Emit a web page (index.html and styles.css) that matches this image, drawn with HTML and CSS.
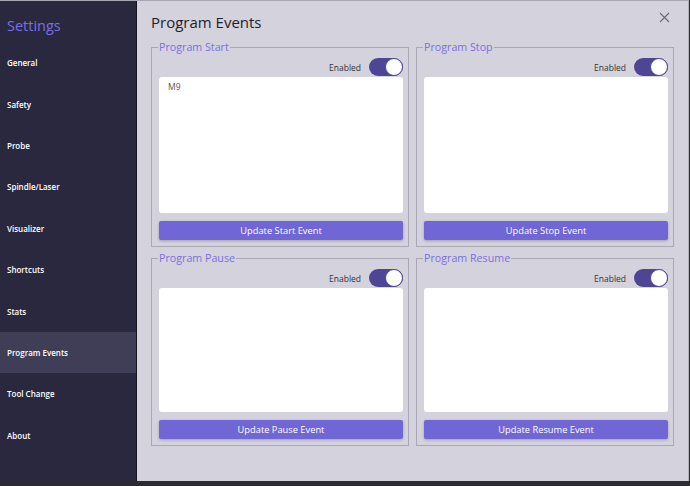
FILE: index.html
```html
<!DOCTYPE html>
<html lang="en">
<head>
    <meta charset="UTF-8">
    <meta name="viewport" content="width=device-width, initial-scale=1.0">
    <title>Settings</title>
    <link rel="stylesheet" href="styles.css">
</head>
<body>
    <div class="window">
        <!-- Sidebar -->
        <nav class="sidebar">
            <div class="sidebar-title">Settings</div>
            <div class="nav-item">General</div>
            <div class="nav-item">Safety</div>
            <div class="nav-item">Probe</div>
            <div class="nav-item">Spindle/Laser</div>
            <div class="nav-item">Visualizer</div>
            <div class="nav-item">Shortcuts</div>
            <div class="nav-item">Stats</div>
            <div class="nav-item active">Program Events</div>
            <div class="nav-item">Tool Change</div>
            <div class="nav-item">About</div>
        </nav>

        <!-- Main content -->
        <main class="content">
            <div class="header">
                <h1>Program Events</h1>
                <svg class="close" width="11" height="11" viewBox="0 0 11 11">
                    <path d="M1 1 L10 10 M10 1 L1 10" stroke="#6b6a73" stroke-width="1.1" fill="none"/>
                </svg>
            </div>

            <div class="events">
                <fieldset class="event">
                    <legend>Program Start</legend>
                    <div class="toggle-row">
                        <span>Enabled</span>
                        <div class="toggle"><div class="knob"></div></div>
                    </div>
                    <div class="code tall">M9</div>
                    <button>Update Start Event</button>
                </fieldset>

                <fieldset class="event">
                    <legend>Program Stop</legend>
                    <div class="toggle-row">
                        <span>Enabled</span>
                        <div class="toggle"><div class="knob"></div></div>
                    </div>
                    <div class="code tall"></div>
                    <button>Update Stop Event</button>
                </fieldset>

                <fieldset class="event">
                    <legend>Program Pause</legend>
                    <div class="toggle-row">
                        <span>Enabled</span>
                        <div class="toggle"><div class="knob"></div></div>
                    </div>
                    <div class="code short"></div>
                    <button>Update Pause Event</button>
                </fieldset>

                <fieldset class="event">
                    <legend>Program Resume</legend>
                    <div class="toggle-row">
                        <span>Enabled</span>
                        <div class="toggle"><div class="knob"></div></div>
                    </div>
                    <div class="code short"></div>
                    <button>Update Resume Event</button>
                </fieldset>
            </div>
        </main>
    </div>
</body>
</html>
```

FILE: styles.css
```css
body {
    margin: 0;
    background-color: #2b2b2e;
    font-family: "Open Sans", "Noto Sans", sans-serif;
    width: 690px;
    height: 486px;
    overflow: hidden;
}

.window {
    display: flex;
    width: 688px;
    height: 480px;
    border-top: 1px solid #a9a7b3;
    border-right: 1px solid #b4b2bd;
    background-color: #d4d2dd;
}

/* Sidebar */
.sidebar {
    width: 136px;
    flex-shrink: 0;
    background-color: #29283e;
    border-right: 1px solid #14131d;
}

.sidebar-title {
    height: 41px;
    box-sizing: border-box;
    padding: 15px 0 0 7px;
    font-size: 14.5px;
    line-height: 20px;
    color: #7a6ee6;
}

.nav-item {
    height: 41.4px;
    display: flex;
    align-items: center;
    padding-left: 7px;
    font-size: 8px;
    font-weight: 600;
    color: #ffffff;
}

.nav-item.active {
    background-color: #403e57;
}

/* Content */
.content {
    flex: 1;
    padding: 0 14px 0 14px;
}

.header {
    display: flex;
    justify-content: space-between;
    align-items: center;
    height: 39px;
}

.header h1 {
    margin: 2px 0 0 0;
    font-size: 15px;
    font-weight: 400;
    color: #1f1e26;
}

.close {
    margin: -6px 4px 0 0;
}

.events {
    display: grid;
    grid-template-columns: 1fr 1fr;
    column-gap: 7px;
    row-gap: 4px;
}

.event {
    margin: 0;
    min-width: 0;
    border: 1px solid #a9a7b4;
    padding: 4px 5px 6px 7px;
    display: flex;
    flex-direction: column;
}

.event legend {
    padding: 0 1px;
    margin-left: -1px;
    font-size: 10.7px;
    line-height: 14px;
    color: #7b6fe0;
}

.toggle-row {
    display: flex;
    justify-content: flex-end;
    align-items: center;
    gap: 8px;
    font-size: 8.5px;
    color: #333;
    margin-bottom: 1px;
}

.toggle {
    width: 34px;
    height: 18px;
    border-radius: 9px;
    background-color: #4e4694;
    display: flex;
    justify-content: flex-end;
    align-items: center;
}

.knob {
    width: 16px;
    height: 16px;
    border-radius: 50%;
    background-color: #fff;
    border: 1px solid #4e4694;
}

.code {
    background-color: #fff;
    border-radius: 3px;
    padding: 4px 9px;
    box-sizing: border-box;
    font-size: 8.5px;
    line-height: 12px;
    color: #555;
}

.code.tall {
    height: 136px;
}

.code.short {
    height: 124px;
}

.event button {
    margin-top: 8px;
    height: 19px;
    border: none;
    border-radius: 2px;
    background-color: #7066d5;
    color: #fff;
    font-family: inherit;
    font-size: 9.3px;
    box-shadow: 0 1px 3px rgba(0, 0, 0, 0.25);
    padding: 0;
}
```
